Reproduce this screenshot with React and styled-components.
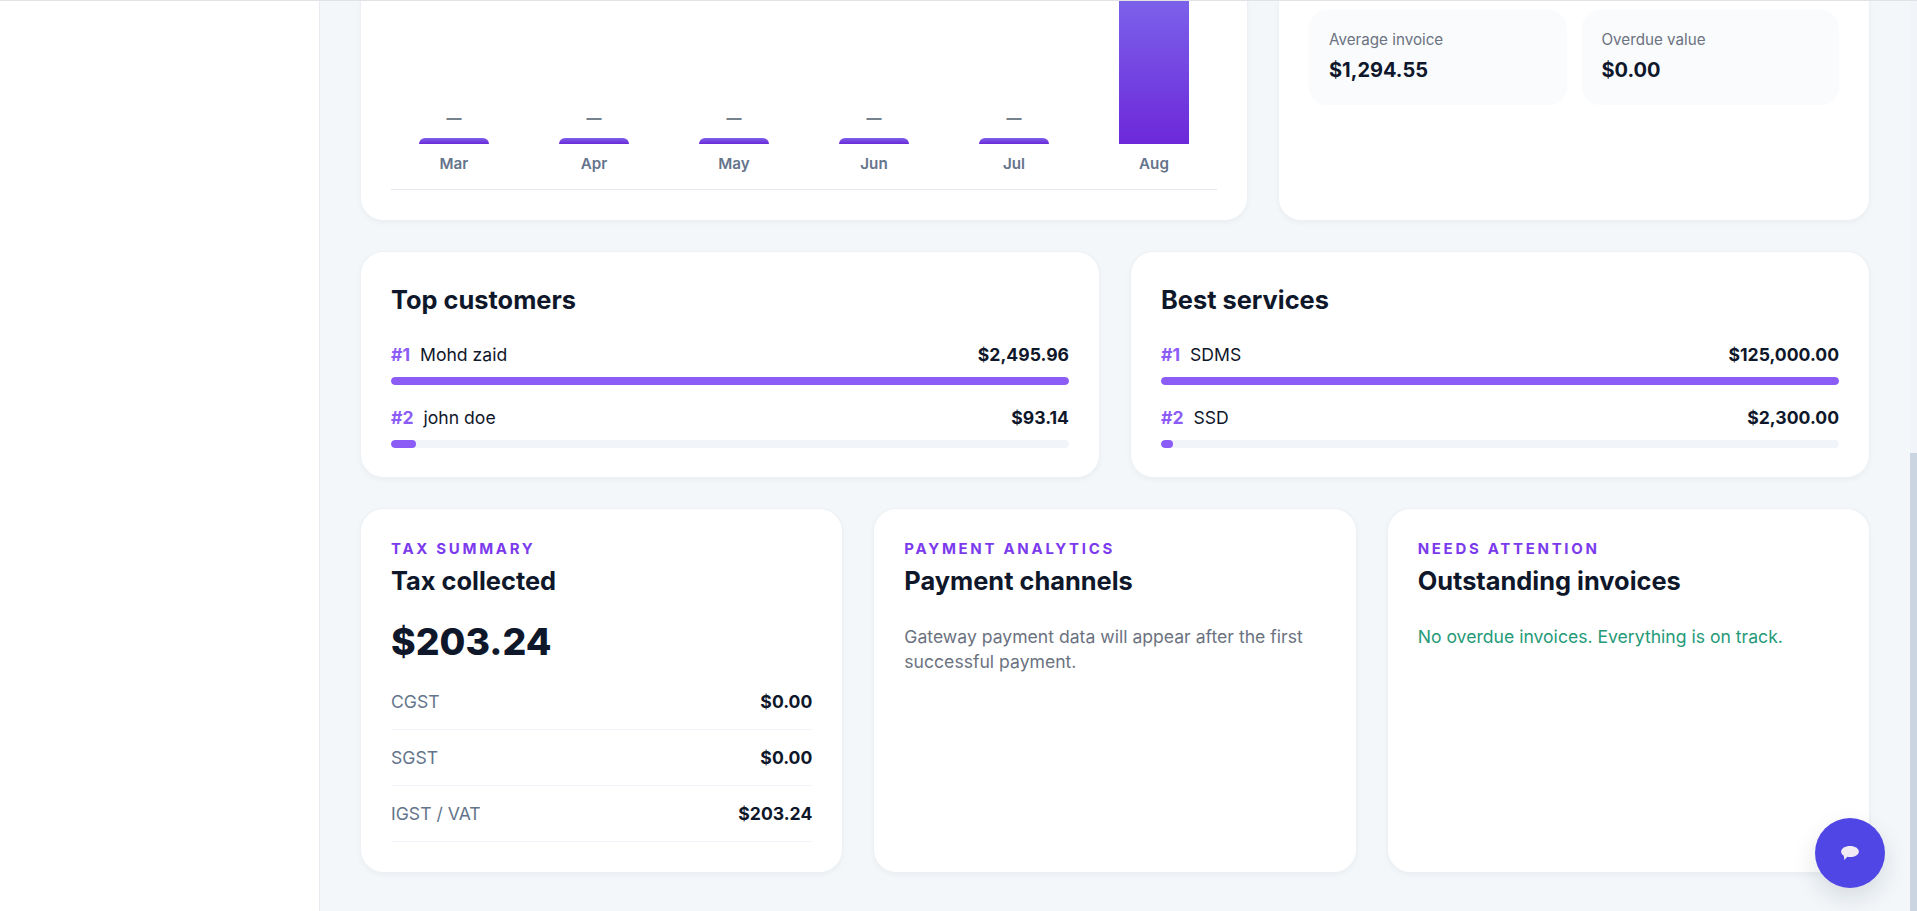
import React from "react";
import styled, { createGlobalStyle } from "styled-components";

const months = [
  { name: "Mar", value: "—", height: 6 },
  { name: "Apr", value: "—", height: 6 },
  { name: "May", value: "—", height: 6 },
  { name: "Jun", value: "—", height: 6 },
  { name: "Jul", value: "—", height: 6 },
  { name: "Aug", height: 143 },
];

const customers = [
  { rank: "#1", name: "Mohd zaid", amount: "$2,495.96", pct: 100 },
  { rank: "#2", name: "john doe", amount: "$93.14", pct: 3.73 },
];

const services = [
  { rank: "#1", name: "SDMS", amount: "$125,000.00", pct: 100 },
  { rank: "#2", name: "SSD", amount: "$2,300.00", pct: 1.84 },
];

const taxes = [
  { label: "CGST", amount: "$0.00" },
  { label: "SGST", amount: "$0.00" },
  { label: "IGST / VAT", amount: "$203.24" },
];

function RankList({ items }) {
  return (
    <RankRows>
      {items.map((item) => (
        <RankRow key={item.rank}>
          <RankHead>
            <RankName>
              <RankNo>{item.rank}</RankNo>
              {item.name}
            </RankName>
            <Amount>{item.amount}</Amount>
          </RankHead>
          <Track>
            <Fill $pct={item.pct} />
          </Track>
        </RankRow>
      ))}
    </RankRows>
  );
}

function App() {
  return (
    <Shell>
      <GlobalStyle />
      <Sidebar />
      <Main>
        <TopRow>
          <ChartCard>
            <Chart>
              {months.map((m) => (
                <Column key={m.name}>
                  {m.value && <Dash>{m.value}</Dash>}
                  <Bar $height={m.height} />
                  <Month>{m.name}</Month>
                </Column>
              ))}
            </Chart>
          </ChartCard>
          <StatsCard>
            <Tile>
              <TileLabel>Average invoice</TileLabel>
              <TileValue>$1,294.55</TileValue>
            </Tile>
            <Tile>
              <TileLabel>Overdue value</TileLabel>
              <TileValue>$0.00</TileValue>
            </Tile>
          </StatsCard>
        </TopRow>

        <MiddleRow>
          <RankCard>
            <Title>Top customers</Title>
            <RankList items={customers} />
          </RankCard>
          <RankCard>
            <Title>Best services</Title>
            <RankList items={services} />
          </RankCard>
        </MiddleRow>

        <BottomRow>
          <InfoCard>
            <Eyebrow>Tax summary</Eyebrow>
            <Title>Tax collected</Title>
            <BigValue>$203.24</BigValue>
            <div>
              {taxes.map((t) => (
                <TaxRow key={t.label}>
                  <TaxLabel>{t.label}</TaxLabel>
                  <Amount>{t.amount}</Amount>
                </TaxRow>
              ))}
            </div>
          </InfoCard>
          <InfoCard>
            <Eyebrow>Payment analytics</Eyebrow>
            <Title>Payment channels</Title>
            <Note>Gateway payment data will appear after the first successful payment.</Note>
          </InfoCard>
          <InfoCard>
            <Eyebrow>Needs attention</Eyebrow>
            <Title>Outstanding invoices</Title>
            <Note $good>No overdue invoices. Everything is on track.</Note>
          </InfoCard>
        </BottomRow>
      </Main>
      <Scrollbar>
        <Thumb />
      </Scrollbar>
      <ChatButton aria-label="Chat">
        <svg width="20" height="16" viewBox="0 0 22 18">
          <path
            d="M11 1c5.500 0 10 2.700 10 6.300s-4.500 6.300-10 6.300c-1 0-2-.1-3-.3L4.600 17l-.5-4.800C2.200 11 1 9.300 1 7.300 1 3.700 5.500 1 11 1z"
            fill="#f1ebf4"
          />
        </svg>
      </ChatButton>
    </Shell>
  );
}

export default App;

const GlobalStyle = createGlobalStyle`
  html, body {
    margin: 0;
    height: 100%;
    overflow: hidden;
  }
  body {
    font-family: Inter, "Liberation Sans", sans-serif;
    color: #0f172a;
    background: #f3f7fa;
  }
  * {
    box-sizing: border-box;
  }
`;

const Shell = styled.div`
  display: flex;
  height: 911px;
  overflow: hidden;
  border-top: 1px solid #e2e2e4;
  background: #f3f7fa;
`;

const Sidebar = styled.aside`
  flex: 0 0 320px;
  background: #fff;
  border-right: 1px solid #e8ecf1;
`;

const Main = styled.main`
  flex: 1;
  min-width: 0;
  padding: 0 41px;
  display: flex;
  flex-direction: column;
  gap: 32px;
`;

const Scrollbar = styled.div`
  flex: 0 0 7px;
  background: #f1f5f9;
  padding-top: 452px;
`;

const Thumb = styled.div`
  height: 100%;
  background: #cbd5e1;
`;

const Card = styled.section`
  background: #fff;
  border: 1px solid #fff;
  border-radius: 22px;
  box-shadow: 0 0 0 1px #edf1f5, 0 2px 6px rgba(15, 23, 42, 0.05);
`;

const TopRow = styled.div`
  display: grid;
  grid-template-columns: 886px 590px;
  gap: 32px;
`;

const ChartCard = styled(Card)`
  height: 219px;
  padding: 0 29px;
  border-top: 0;
  border-radius: 0 0 22px 22px;
`;

const Chart = styled.div`
  display: grid;
  grid-template-columns: repeat(6, 1fr);
  gap: 14px;
  height: 189px;
  border-bottom: 1px solid #e5e9ef;
`;

const Column = styled.div`
  display: flex;
  flex-direction: column;
  align-items: center;
  justify-content: flex-end;
  padding-bottom: 16px;
`;

const Dash = styled.span`
  font-size: 15px;
  line-height: 20px;
  font-weight: 800;
  color: #75818d;
  margin-bottom: 10px;
`;

const Bar = styled.div`
  width: 70px;
  height: ${(p) => p.$height}px;
  border-radius: ${(p) => (p.$height > 20 ? "0" : "6px 6px 0 0")};
  background: linear-gradient(180deg, #7b61ea 0%, #6d28d9 100%);
`;

const Month = styled.span`
  margin-top: 11px;
  font-size: 15.2px;
  line-height: 18px;
  font-weight: 600;
  color: #64748b;
`;

const StatsCard = styled(Card)`
  height: 219px;
  padding: 9px 29px 0;
  border-top: 0;
  border-radius: 0 0 22px 22px;
  display: grid;
  grid-template-columns: 1fr 1fr;
  gap: 15px;
  align-items: start;
`;

const Tile = styled.div`
  height: 95px;
  padding: 20px 20px 0;
  background: #f9fbfd;
  border-radius: 18px;
`;

const TileLabel = styled.div`
  font-size: 15.2px;
  line-height: 20px;
  color: #6b7280;
`;

const TileValue = styled.div`
  margin-top: 8px;
  font-size: 20px;
  line-height: 24px;
  font-weight: 700;
  color: #0f172a;
`;

const MiddleRow = styled.div`
  display: grid;
  grid-template-columns: 1fr 1fr;
  gap: 32px;
`;

const RankCard = styled(Card)`
  height: 225px;
  padding: 29px 29px 0;
`;

const Title = styled.h3`
  margin: 0;
  font-size: 25.4px;
  line-height: 36px;
  font-weight: 700;
  color: #0f172a;
`;

const RankRows = styled.div`
  margin-top: 24px;
  display: flex;
  flex-direction: column;
  gap: 20px;
`;

const RankRow = styled.div`
  display: flex;
  flex-direction: column;
  gap: 9px;
`;

const RankHead = styled.div`
  display: flex;
  justify-content: space-between;
  align-items: center;
  font-size: 17.6px;
  line-height: 26px;
`;

const RankName = styled.span`
  color: #0f172a;
`;

const RankNo = styled.span`
  margin-right: 10px;
  color: #8b5cf6;
  font-weight: 700;
`;

const Amount = styled.span`
  font-size: 17.6px;
  font-weight: 700;
  color: #0f172a;
`;

const Track = styled.div`
  height: 8px;
  border-radius: 6px;
  background: #f1f5f9;
  overflow: hidden;
`;

const Fill = styled.div`
  width: ${(p) => p.$pct}%;
  height: 100%;
  border-radius: 6px;
  background: #8b5cf6;
`;

const BottomRow = styled.div`
  display: grid;
  grid-template-columns: repeat(3, 1fr);
  gap: 32px;
`;

const InfoCard = styled(Card)`
  height: 363px;
  padding: 29px 29px 0;
`;

const Eyebrow = styled.div`
  margin-bottom: 4px;
  font-size: 15px;
  line-height: 20px;
  font-weight: 700;
  letter-spacing: 2.7px;
  text-transform: uppercase;
  color: #7c3aed;
`;

const BigValue = styled.div`
  margin: 18px 0 7px;
  font-size: 37.4px;
  line-height: 50px;
  font-weight: 800;
  color: #0f172a;
`;

const TaxRow = styled.div`
  display: flex;
  justify-content: space-between;
  align-items: center;
  height: 56px;
  border-bottom: 1px solid #f1f5f9;
`;

const TaxLabel = styled.span`
  font-size: 17.6px;
  color: #64748b;
`;

const Note = styled.p`
  margin: 25px 0 0;
  font-size: 17.6px;
  line-height: 25px;
  color: ${(p) => (p.$good ? "#259a78" : "#6b7280")};
`;

const ChatButton = styled.button`
  position: fixed;
  left: 1815px;
  top: 818px;
  width: 70px;
  height: 70px;
  padding: 0;
  border: 0;
  border-radius: 50%;
  background: #4f46e5;
  box-shadow: 0 10px 24px rgba(15, 23, 42, 0.12);
  display: flex;
  align-items: center;
  justify-content: center;
`;
